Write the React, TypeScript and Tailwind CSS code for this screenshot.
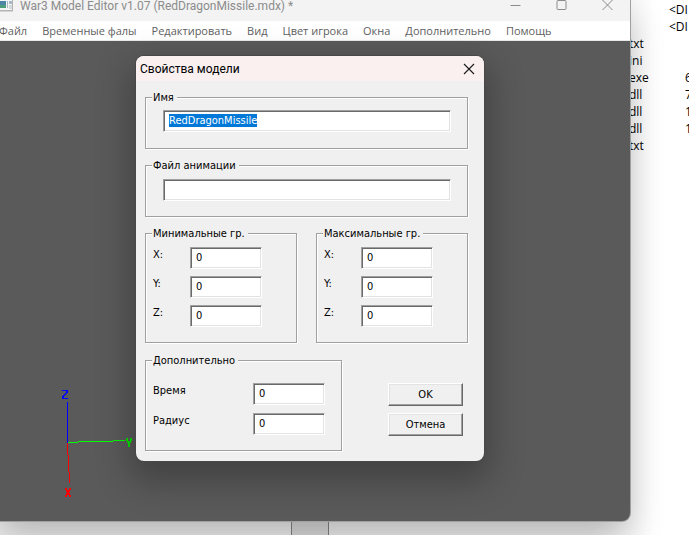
import { useEffect, useRef, type ReactNode } from "react";

const fileRows = [
  { ext: "", size: "<DI", dir: true },
  { ext: "", size: "<DI", dir: true },
  { ext: "txt", size: "" },
  { ext: "ini", size: "" },
  { ext: "exe", size: "6" },
  { ext: "dll", size: "7" },
  { ext: "dll", size: "1" },
  { ext: "dll", size: "1" },
  { ext: "txt", size: "" },
];

const menuItems = [
  "Файл",
  "Временные фалы",
  "Редактировать",
  "Вид",
  "Цвет игрока",
  "Окна",
  "Дополнительно",
  "Помощь",
];

const fieldClass =
  "block h-[22px] rounded-none border border-t-[#a0a0a0] border-l-[#a0a0a0] border-r-white border-b-white bg-white px-[5px] pt-[3px] pb-1 leading-[13px] text-black shadow-[inset_1px_1px_0_#696969,inset_-1px_-1px_0_#e3e3e3] outline-none selection:bg-[#0078d7] selection:text-white";

const buttonClass =
  "h-[23px] w-[75px] border border-t-white border-l-white border-r-[#696969] border-b-[#696969] bg-[#f0f0f0] leading-[13px] shadow-[inset_-1px_-1px_0_#a0a0a0,inset_1px_1px_0_#e3e3e3]";

function Group({ title, className, children }: { title: string; className: string; children: ReactNode }) {
  return (
    <fieldset
      className={`min-w-0 border border-[#a0a0a0] px-[7px] shadow-[1px_1px_0_#fff,inset_1px_1px_0_#fff] ${className}`}
    >
      <legend className="-ml-px bg-[#f0f0f0] pr-[3px] pl-px leading-[13px]">{title}</legend>
      {children}
    </fieldset>
  );
}

function NumberRow({ id, label }: { id: string; label: string }) {
  return (
    <div className="flex justify-between">
      <label htmlFor={id} className="leading-4">
        {label}
      </label>
      <input id={id} type="text" defaultValue="0" className={`w-[72px] ${fieldClass}`} />
    </div>
  );
}

function Bounds({ title, prefix }: { title: string; prefix: string }) {
  return (
    <Group title={title} className="flex-1 pt-[7px] pb-[15px]">
      <div className="mr-[27px] flex flex-col gap-[7px]">
        <NumberRow id={`${prefix}-x`} label="X:" />
        <NumberRow id={`${prefix}-y`} label="Y:" />
        <NumberRow id={`${prefix}-z`} label="Z:" />
      </div>
    </Group>
  );
}

function PropertiesDialog() {
  const nameRef = useRef<HTMLInputElement>(null);
  useEffect(() => {
    nameRef.current?.focus();
    nameRef.current?.select();
  }, []);

  return (
    <div
      role="dialog"
      aria-labelledby="dialog-title"
      className="absolute top-14 left-[136px] w-[348px] overflow-hidden rounded-lg bg-[#f0f0f0] text-[11px] text-black shadow-[0_0_0_1px_#484848,0_14px_34px_6px_rgba(0,0,0,0.28)]"
    >
      <header className="flex h-[25px] items-center justify-between bg-[#f9f0ef] pr-2 pl-1">
        <h2 id="dialog-title" className="font-[Roboto,'Noto_Sans',sans-serif] text-[12px] leading-4">
          Свойства модели
        </h2>
        <button type="button" aria-label="Закрыть" className="p-px">
          <svg width="12" height="12" viewBox="0 0 12 12" stroke="#1a1a1a" strokeWidth="1.1" fill="none">
            <path d="M1 1l10 10M11 1L1 11" />
          </svg>
        </button>
      </header>
      <form className="flex flex-col gap-[10px] pt-[10px] pr-4 pb-[10px] pl-[9px]">
        <Group title="Имя" className="pt-[6px] pb-4">
          <div className="mr-[9px] ml-[10px]">
            <input
              ref={nameRef}
              aria-label="Имя"
              type="text"
              defaultValue="RedDragonMissile"
              className={`w-full ${fieldClass}`}
            />
          </div>
        </Group>
        <Group title="Файл анимации" className="pt-[7px] pb-[15px]">
          <div className="mr-[9px] ml-[10px]">
            <input aria-label="Файл анимации" type="text" className={`w-full ${fieldClass}`} />
          </div>
        </Group>
        <div className="flex gap-[19px]">
          <Bounds title="Минимальные гр." prefix="min" />
          <Bounds title="Максимальные гр." prefix="max" />
        </div>
        <div className="flex justify-between pt-px">
          <Group title="Дополнительно" className="w-[197px] pt-4 pb-[15px]">
            <div className="mr-[9px] flex flex-col gap-2">
              <NumberRow id="time" label="Время" />
              <NumberRow id="radius" label="Радиус" />
            </div>
          </Group>
          <div className="mr-[5px] flex flex-col gap-[7px] pt-[29px]">
            <button type="submit" className={buttonClass}>
              OK
            </button>
            <button type="button" className={buttonClass}>
              Отмена
            </button>
          </div>
        </div>
      </form>
    </div>
  );
}

function AxisGizmo() {
  return (
    <svg
      className="absolute bottom-6 left-[60px]"
      width="74"
      height="110"
      viewBox="0 0 74 110"
      shapeRendering="crispEdges"
      role="img"
      aria-label="Оси X Y Z"
    >
      <path fill="#0000ff" d="M7 15h1v41h-1z" />
      <path fill="#ff0000" d="M7 56h1v12h-1zM8 68h1v17h-1zM9 85h1v11h-1z" />
      <path fill="#00ff00" d="M8 55h10v1h-10zM18 54h35v1h-35zM53 53h12v1h-12z" />
      <g fill="none" strokeWidth="1">
        <path
          stroke="#0000ff"
          d="M2 3.500h6M6 4.500h2M6 5.500h2M5 6.500h2M4 7.500h2M3 8.500h2M2 9.500h2M2 10.500h2M2 11.500h6"
        />
        <path
          stroke="#00e000"
          d="M66 51.500h2m2 0h2M66 52.500h2m2 0h2M66 53.500h2m2 0h2M67 54.500h4M67 55.500h4M68 56.500h2M68 57.500h2M68 58.500h2M68 59.500h2"
        />
        <path
          stroke="#ff0000"
          d="M5 101.500h2m2 0h2M5 102.500h2m2 0h2M6 103.500h4M6 104.500h4M7 105.500h2M6 106.500h4M6 107.500h4M5 108.500h2m2 0h2M5 109.500h2m2 0h2"
        />
      </g>
    </svg>
  );
}

export default function App() {
  return (
    <div className="relative h-screen overflow-hidden bg-white font-['DejaVu_Sans_Condensed','DejaVu_Sans',sans-serif]">
      <div className="mr-[35px] flex h-full bg-[linear-gradient(90deg,#ececec_90%,#ffffff)] pl-[291px]">
        <div className="w-[38px] border-x border-[#808080] bg-[#d8d8d8]" />
      </div>
      <table className="absolute top-px left-[628px] w-max border-collapse font-['Open_Sans','Noto_Sans',sans-serif] text-[12px] leading-[17px] text-black">
        <tbody>
          {fileRows.map((row, i) => (
            <tr key={i} className="h-[17px]">
              <td className="w-[41px] min-w-[41px] p-0 pl-px">{row.ext}</td>
              <td className={row.dir ? "p-0" : "p-0 pl-4"}>{row.size}</td>
            </tr>
          ))}
        </tbody>
      </table>

      <main className="absolute top-0 right-[59px] bottom-[14px] left-0 flex flex-col rounded-br-lg bg-[#5a5a5a] shadow-[0_0_0_1px_#a0a0a0,0_14px_34px_0_rgba(0,0,0,0.24)]">
        <header className="flex h-[21px] items-start justify-between bg-[#f3f3f3] text-[#8c8c8c]">
          <div className="flex items-start gap-[7px]">
            <svg width="13" height="12" viewBox="0 0 13 12" aria-hidden="true">
              <path d="M0 0h13v11.500H0z" fill="#b4b4b4" />
              <path d="M0 0h12v10H0z" fill="#f5f5f5" />
              <path d="M0 1h6v7H0z" fill="#4f86a8" />
              <path d="M0 5h6v3H0z" fill="#4f9f7c" />
              <path d="M7 1h1v7H7zM9 1h3v3H9z" fill="#a9b8c4" />
              <path d="M9 5h3v4H9z" fill="#d4d9dc" />
            </svg>
            <h1 className="font-[Roboto,'Noto_Sans',sans-serif] text-[12px] leading-3">
              War3 Model Editor v1.07 (RedDragonMissile.mdx) *
            </h1>
          </div>
          <div className="flex gap-[35px] pr-[17px]">
            <button type="button" aria-label="Свернуть">
              <svg width="11" height="11" viewBox="0 0 11 11" stroke="#8c8c8c" fill="none">
                <path d="M.500 5.500h10" />
              </svg>
            </button>
            <button type="button" aria-label="Развернуть">
              <svg width="11" height="11" viewBox="0 0 11 11" stroke="#8c8c8c" fill="none">
                <rect x="1" y=".500" width="9" height="9" rx="1" />
              </svg>
            </button>
            <button type="button" aria-label="Закрыть">
              <svg width="11" height="11" viewBox="0 0 11 11" stroke="#8c8c8c" fill="none">
                <path d="M.500 0l10 10M10.500 0l-10 10" />
              </svg>
            </button>
          </div>
        </header>
        <nav className="-ml-px flex h-5 items-center gap-[15px] border-b border-[#e8e8e8] bg-white font-['Open_Sans','Noto_Sans',sans-serif] text-[11px] leading-4 whitespace-nowrap text-[#5f5f5f]">
          {menuItems.map((item) => (
            <button type="button" key={item}>
              {item}
            </button>
          ))}
        </nav>
        <section className="relative flex-1 overflow-hidden rounded-br-lg">
          <AxisGizmo />
        </section>
        <PropertiesDialog />
      </main>
    </div>
  );
}
